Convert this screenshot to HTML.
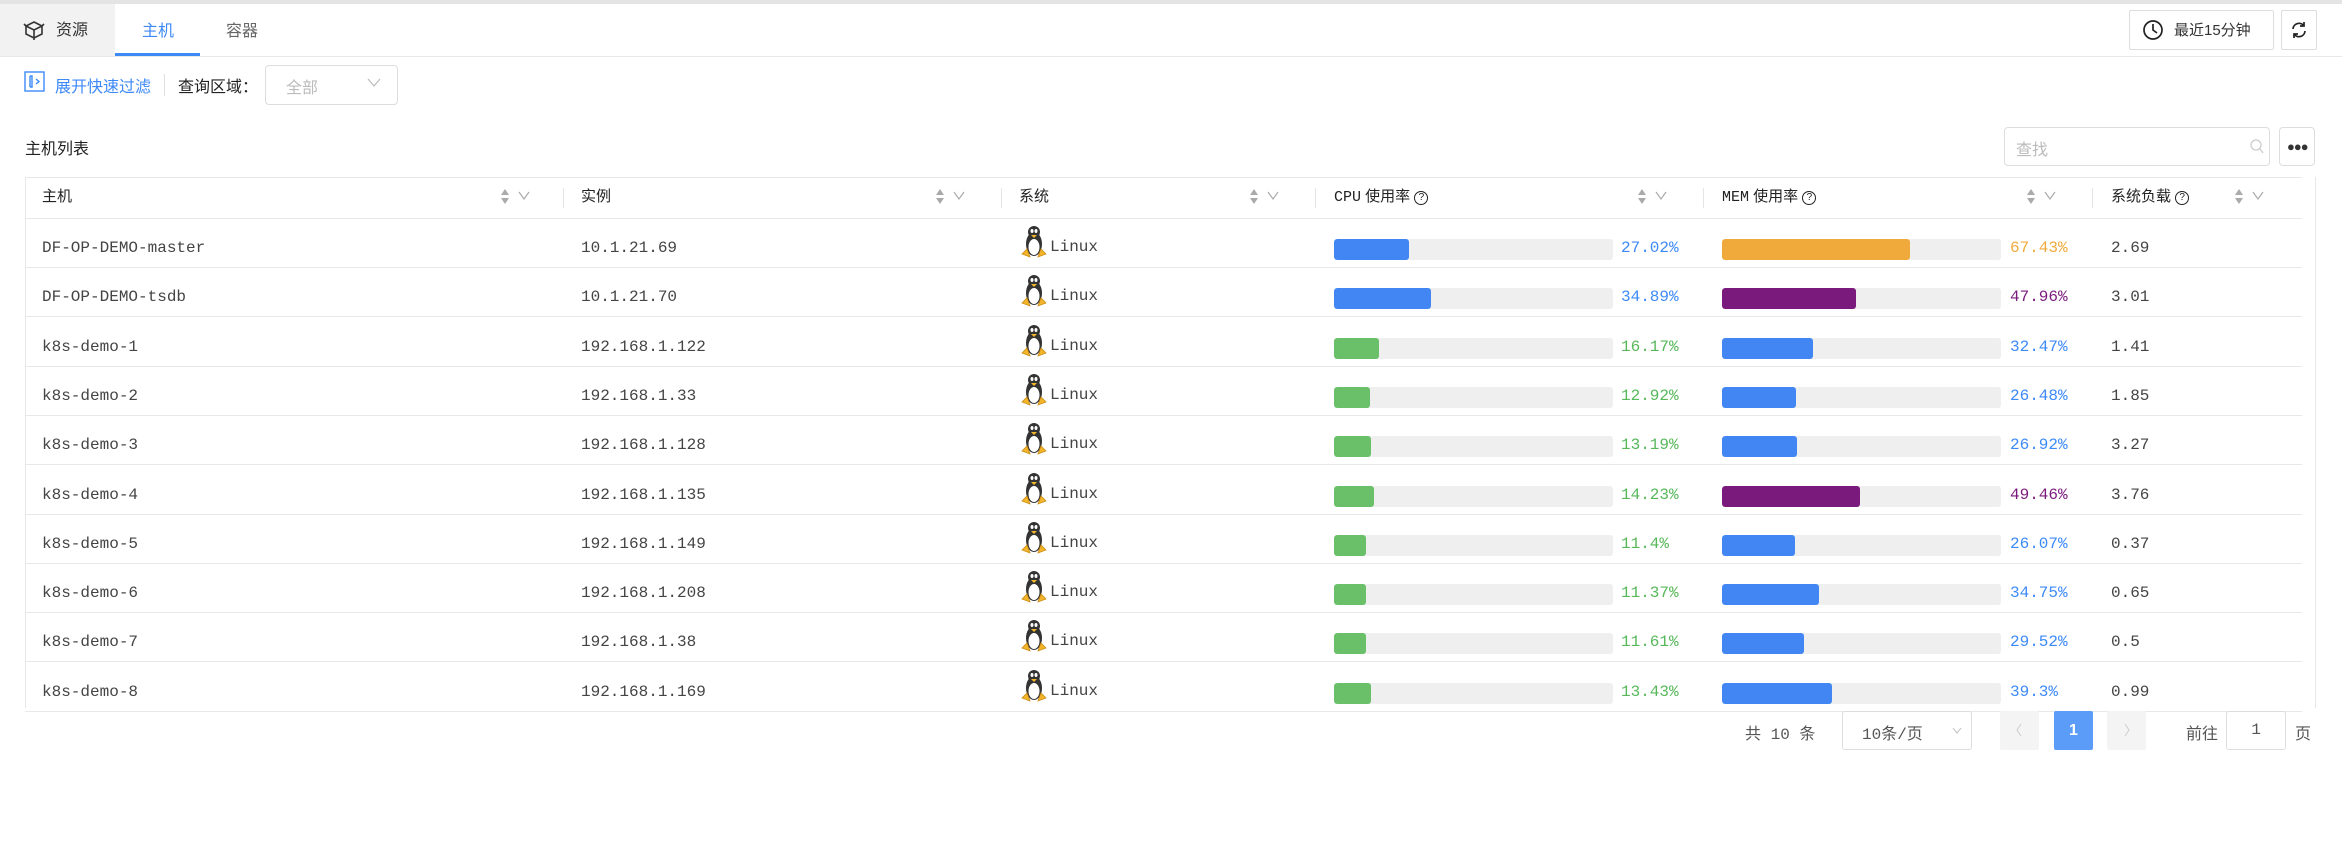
<!DOCTYPE html>
<html><head><meta charset="utf-8"><style>
*{margin:0;padding:0;box-sizing:border-box}
body{width:2342px;height:852px;background:#fff;position:relative;overflow:hidden;font-family:"Liberation Sans","Noto Sans CJK SC",sans-serif;color:#333}
.a{position:absolute}
.cn{font-family:"Liberation Sans","Noto Sans CJK SC",sans-serif;font-size:16px}
.mono{font-family:"Liberation Mono","Noto Sans CJK SC",monospace;font-size:16px;color:#444}
.hl{position:absolute;left:25px;width:2277px;height:1px;background:#e8e8e8}
.vd{position:absolute;top:188px;width:1px;height:20px;background:#e5e5e5}
.bar{position:absolute;height:21px;width:279px;background:#efefef;border-radius:3px;overflow:hidden}
.bar i{display:block;height:100%;border-radius:3px}
.sort{position:absolute;top:189px}
</style></head><body>
<div class="a" style="left:0;top:0;width:2342px;height:4px;background:#e4e4e4"></div>
<div class="a" style="left:0;top:4px;width:115px;height:53px;background:#f2f2f2"></div>
<svg class="a" style="left:23px;top:20px" width="22" height="21" viewBox="0 0 22 21" fill="none" stroke="#333" stroke-width="1.6"><path d="M11 2 L19 6 L19 14 L11 18 L3 14 L3 6 Z M3 6 L11 10 L19 6 M11 10 L11 20"/><path d="M1 4 L3 6 M21 4 L19 6" /></svg>
<div class="a cn" style="left:56px;top:16px;color:#333">资源</div>
<div class="a cn" style="left:142px;top:17px;color:#3d8af7">主机</div>
<div class="a" style="left:115px;top:53px;width:85px;height:3px;background:#3d8af7"></div>
<div class="a cn" style="left:226px;top:17px;color:#666">容器</div>
<div class="a" style="left:0;top:56px;width:2342px;height:1px;background:#e8e8e8"></div>
<div class="a" style="left:2129px;top:10px;width:145px;height:40px;border:1px solid #ddd;border-radius:2px"></div>
<svg class="a" style="left:2142px;top:19px" width="22" height="22" viewBox="0 0 22 22" fill="none" stroke="#222" stroke-width="1.7"><circle cx="11" cy="11" r="9"/><path d="M11 5 V11 L15 14"/></svg>
<div class="a cn" style="left:2174px;top:19px;font-size:15px;color:#333">最近15分钟</div>
<div class="a" style="left:2281px;top:10px;width:36px;height:40px;border:1px solid #ddd;border-radius:2px"></div>
<svg class="a" style="left:2290px;top:20px" width="18" height="20" viewBox="0 0 18 20" fill="none" stroke="#222" stroke-width="1.7"><path d="M14 6 A6 6 0 0 0 3 9"/><path d="M4 14 A6 6 0 0 0 15 11"/><path d="M14 2 V6 H10"/><path d="M4 18 V14 H8"/></svg>

<svg class="a" style="left:24px;top:71px" width="21" height="21" viewBox="0 0 21 21" fill="none" stroke="#3d8af7" stroke-width="1.4"><rect x="1" y="1" width="19" height="19"/><path d="M6 5 V16 M6 5 H8 V16 H6 M12 8 L15 10.5 L12 13"/></svg>
<div class="a cn" style="left:55px;top:73px;color:#3d8af7">展开快速过滤</div>
<div class="a" style="left:164px;top:74px;width:1px;height:22px;background:#e0e0e0"></div>
<div class="a cn" style="left:178px;top:73px;color:#222">查询区域：</div>
<div class="a" style="left:265px;top:65px;width:133px;height:40px;border:1px solid #ddd;border-radius:4px"></div>
<div class="a cn" style="left:286px;top:74px;color:#bbb">全部</div>
<svg class="a" style="left:367px;top:78px" width="14" height="10" viewBox="0 0 14 10" fill="none" stroke="#bbb" stroke-width="1.2"><path d="M1 1 L7 8 L13 1"/></svg>

<div class="a cn" style="left:25px;top:135px;color:#222">主机列表</div>
<div class="a" style="left:2004px;top:127px;width:266px;height:39px;border:1px solid #ddd;border-radius:4px"></div>
<div class="a cn" style="left:2016px;top:136px;color:#bbb">查找</div>
<svg class="a" style="left:2250px;top:139px" width="14" height="16" viewBox="0 0 14 16" fill="none" stroke="#ccc" stroke-width="1.3"><circle cx="6" cy="6" r="5"/><path d="M10 10 L13 14"/></svg>
<div class="a" style="left:2279px;top:127px;width:36px;height:39px;border:1px solid #ddd;border-radius:4px"></div>
<div class="a" style="left:2287px;top:139px;font-size:13px;font-weight:bold;color:#333;letter-spacing:-1px">●●●</div>

<div class="hl" style="top:177px"></div>
<div class="a" style="left:25px;top:177px;width:1px;height:531px;background:#e8e8e8"></div>
<div class="a" style="left:2315px;top:177px;width:1px;height:531px;background:#e8e8e8"></div>
<div class="hl" style="top:218px"></div>
<div class="a cn" style="left:42px;top:185px;font-size:15px;color:#222">主机</div>
<div class="a cn" style="left:581px;top:185px;font-size:15px;color:#222">实例</div>
<div class="a cn" style="left:1019px;top:185px;font-size:15px;color:#222">系统</div>
<div class="a cn" style="left:1334px;top:185px;font-size:15px;color:#222"><span style="font-family:'Liberation Mono',monospace">CPU</span> 使用率 <span style="display:inline-block;width:14px;height:14px;border:1.5px solid #222;border-radius:50%;font-size:10px;text-align:center;line-height:12px;vertical-align:1px">?</span></div>
<div class="a cn" style="left:1722px;top:185px;font-size:15px;color:#222"><span style="font-family:'Liberation Mono',monospace">MEM</span> 使用率 <span style="display:inline-block;width:14px;height:14px;border:1.5px solid #222;border-radius:50%;font-size:10px;text-align:center;line-height:12px;vertical-align:1px">?</span></div>
<div class="a cn" style="left:2111px;top:185px;font-size:15px;color:#222">系统负载 <span style="display:inline-block;width:14px;height:14px;border:1.5px solid #222;border-radius:50%;font-size:10px;text-align:center;line-height:12px;vertical-align:1px">?</span></div>
<div class="vd" style="left:563px"></div><div class="vd" style="left:1001px"></div><div class="vd" style="left:1315px"></div><div class="vd" style="left:1703px"></div><div class="vd" style="left:2092px"></div>
<svg width="0" height="0" style="position:absolute"><defs><g id="s"><path d="M4 0 L8 6 H0 Z M0 9 H8 L4 15 Z" fill="#aaa"/><path d="M18 3 L23 10 L28 3" fill="none" stroke="#aaa" stroke-width="1.2"/></g>
<g id="p"><ellipse cx="15" cy="20" rx="8" ry="12" fill="#333"/><ellipse cx="15" cy="23" rx="5.5" ry="8" fill="#fff"/><circle cx="15" cy="8" r="6" fill="#333"/><ellipse cx="13" cy="7" rx="1.5" ry="2" fill="#fff"/><ellipse cx="17" cy="7" rx="1.5" ry="2" fill="#fff"/><path d="M12 11 L18 11 L15 14 Z" fill="#f3b52a"/><path d="M3 30 L8 25 L11 33 Z M27 30 L22 25 L19 33 Z" fill="#f3b52a" stroke="#c98a10" stroke-width=".8"/></g></defs></svg>
<svg class="sort" style="left:501px" width="30" height="16"><use href="#s"/></svg>
<svg class="sort" style="left:936px" width="30" height="16"><use href="#s"/></svg>
<svg class="sort" style="left:1250px" width="30" height="16"><use href="#s"/></svg>
<svg class="sort" style="left:1638px" width="30" height="16"><use href="#s"/></svg>
<svg class="sort" style="left:2027px" width="30" height="16"><use href="#s"/></svg>
<svg class="sort" style="left:2235px" width="30" height="16"><use href="#s"/></svg>

<div id="rows"></div>
<script>
var d=[["DF-OP-DEMO-master","10.1.21.69",27.02,67.43,"2.69"],["DF-OP-DEMO-tsdb","10.1.21.70",34.89,47.96,"3.01"],["k8s-demo-1","192.168.1.122",16.17,32.47,"1.41"],["k8s-demo-2","192.168.1.33",12.92,26.48,"1.85"],["k8s-demo-3","192.168.1.128",13.19,26.92,"3.27"],["k8s-demo-4","192.168.1.135",14.23,49.46,"3.76"],["k8s-demo-5","192.168.1.149",11.4,26.07,"0.37"],["k8s-demo-6","192.168.1.208",11.37,34.75,"0.65"],["k8s-demo-7","192.168.1.38",11.61,29.52,"0.5"],["k8s-demo-8","192.168.1.169",13.43,39.3,"0.99"]];
function col(v){if(v>=60)return["#f0aa3c","#f0aa3c"];if(v>=40)return["#7a1a7d","#7a1a7d"];if(v>=20)return["#4286f4","#3d8af7"];return["#6abf69","#57b85a"];}
var h="";d.forEach(function(r,i){var t=218+i*49.3;var c1=col(r[2]),c2=col(r[3]);
h+='<div class="hl" style="top:'+(t+49)+'px"></div>';
h+='<div class="a mono" style="left:42px;top:'+(t+21)+'px">'+r[0]+'</div>';
h+='<div class="a mono" style="left:581px;top:'+(t+21)+'px">'+r[1]+'</div>';
h+='<svg class="a" style="left:1019px;top:'+(t+6)+'px" width="30" height="34"><use href="#p"/></svg>';
h+='<div class="a mono" style="left:1050px;top:'+(t+20)+'px">Linux</div>';
h+='<div class="bar" style="left:1334px;top:'+(t+21)+'px"><i style="width:'+(r[2]*2.79)+'px;background:'+c1[0]+'"></i></div>';
h+='<div class="a mono" style="left:1621px;top:'+(t+21)+'px;color:'+c1[1]+'">'+r[2]+'%</div>';
h+='<div class="bar" style="left:1722px;top:'+(t+21)+'px"><i style="width:'+(r[3]*2.79)+'px;background:'+c2[0]+'"></i></div>';
h+='<div class="a mono" style="left:2010px;top:'+(t+21)+'px;color:'+c2[1]+'">'+r[3]+'%</div>';
h+='<div class="a mono" style="left:2111px;top:'+(t+21)+'px">'+r[4]+'</div>';});
document.getElementById("rows").innerHTML=h;
</script>

<div class="a mono" style="left:1745px;top:720px;font-size:16px;color:#555">共 10 条</div>
<div class="a" style="left:1842px;top:711px;width:130px;height:39px;border:1px solid #ddd;border-radius:3px"></div>
<div class="a mono" style="left:1862px;top:720px;color:#555">10条/页</div>
<svg class="a" style="left:1952px;top:727px" width="10" height="7" viewBox="0 0 10 7" fill="none" stroke="#bbb"><path d="M1 1 L5 6 L9 1"/></svg>
<div class="a" style="left:2000px;top:711px;width:39px;height:39px;background:#f4f4f5;border-radius:2px"></div>
<svg class="a" style="left:2015px;top:723px" width="8" height="14" fill="none" stroke="#ccc"><path d="M6 1 L2 7 L6 13"/></svg>
<div class="a" style="left:2054px;top:711px;width:39px;height:39px;background:#5a9cf8;border-radius:2px;color:#fff;font:bold 16px 'Liberation Sans';line-height:39px;text-align:center">1</div>
<div class="a" style="left:2107px;top:711px;width:39px;height:39px;background:#f4f4f5;border-radius:2px"></div>
<svg class="a" style="left:2123px;top:723px" width="8" height="14" fill="none" stroke="#ccc"><path d="M2 1 L6 7 L2 13"/></svg>
<div class="a cn" style="left:2186px;top:720px;color:#555">前往</div>
<div class="a" style="left:2226px;top:711px;width:60px;height:39px;border:1px solid #ddd;border-radius:3px;text-align:center;font:16px 'Liberation Mono';line-height:37px;color:#555">1</div>
<div class="a cn" style="left:2295px;top:720px;color:#555">页</div>
</body></html>
